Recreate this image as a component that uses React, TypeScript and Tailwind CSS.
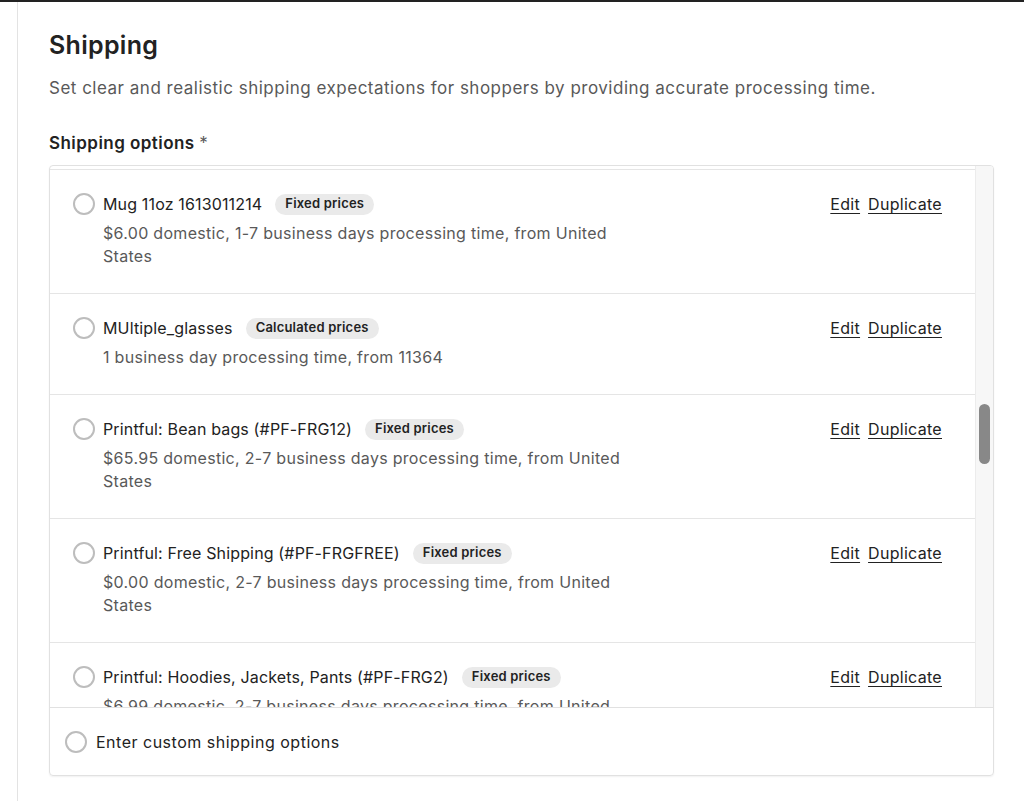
import React from "react";

type Opt = { name: string; badge: string; desc: string };

const options: Opt[] = [
  { name: "Mug 11oz 1613011214", badge: "Fixed prices", desc: "$6.00 domestic, 1-7 business days processing time, from United States" },
  { name: "MUltiple_glasses", badge: "Calculated prices", desc: "1 business day processing time, from 11364" },
  { name: "Printful: Bean bags (#PF-FRG12)", badge: "Fixed prices", desc: "$65.95 domestic, 2-7 business days processing time, from United States" },
  { name: "Printful: Free Shipping (#PF-FRGFREE)", badge: "Fixed prices", desc: "$0.00 domestic, 2-7 business days processing time, from United States" },
  { name: "Printful: Hoodies, Jackets, Pants (#PF-FRG2)", badge: "Fixed prices", desc: "$6.99 domestic, 2-7 business days processing time, from United States" },
];

function Radio() {
  return <span className="block w-[22px] h-[22px] shrink-0 rounded-full border-2 border-[#bdbdbd] bg-white" />;
}

export default function App() {
  return (
    <div
      className="w-[1024px] h-[801px] bg-white border-t-2 border-[#222222] flex overflow-hidden text-[#222222]"
      style={{ fontFamily: "Inter, 'Noto Sans', Arial, sans-serif" }}
    >
      <div className="w-[17px] shrink-0" />
      <div className="flex-1 border-l border-[#e3e3e3] pl-[31px] pt-[27px]">
        <h1 className="text-[25px] leading-[32px] font-semibold tracking-[0.3px]">Shipping</h1>
        <p className="mt-[15px] text-[17px] leading-[24px] tracking-[0.5px] text-[#595959]">
          Set clear and realistic shipping expectations for shoppers by providing accurate processing time.
        </p>
        <div className="mt-[31px] text-[17px] leading-[24px] font-semibold tracking-[0.45px]">
          Shipping options <span className="text-[#595959] font-normal">*</span>
        </div>
        <div className="mt-[10px] w-[945px] border border-[#e1e1e1] rounded-[4px] shadow-[0_1px_2px_rgba(0,0,0,0.06)] overflow-hidden tracking-[0.3px]">
          <div className="flex h-[541px]">
            <div className="flex-1 overflow-hidden">
              <div className="h-[4px] border-b border-[#e5e5e5]" />
              {options.map((o, i) => (
                <div key={i} className="flex items-start border-b border-[#e5e5e5] pl-[23px] pr-[33px] pt-[22px] pb-[25px]">
                  <div className="flex items-start gap-[8px] flex-1">
                    <div className="h-[24px] flex items-center">
                      <Radio />
                    </div>
                    <div>
                      <div className="flex items-center gap-[13px] h-[24px]">
                        <span className="text-[16px] leading-[24px] tracking-[0.15px]">{o.name}</span>
                        <span className="rounded-full bg-[#eaeaea] px-[10px] h-[21px] flex items-center text-[13px] font-semibold tracking-[0.2px]">
                          {o.badge}
                        </span>
                      </div>
                      <div className="mt-[6px] w-[520px] text-[16px] leading-[23px] text-[#595959]">{o.desc}</div>
                    </div>
                  </div>
                  <div className="flex items-center gap-[8px] h-[24px] text-[16px]">
                    <a className="underline underline-offset-[3px]">Edit</a>
                    <a className="underline underline-offset-[3px]">Duplicate</a>
                  </div>
                </div>
              ))}
            </div>
            <div className="w-[18px] shrink-0 bg-[#f7f7f7] border-l border-[#ececec] relative">
              <div className="absolute left-[3px] top-[238px] w-[11px] h-[60px] rounded-full bg-[#888888]" />
            </div>
          </div>
          <div className="border-t border-[#e1e1e1] h-[68px] flex items-center gap-[9px] pl-[15px]">
            <Radio />
            <span className="text-[16px] leading-[24px] tracking-[0.5px]">Enter custom shipping options</span>
          </div>
        </div>
      </div>
    </div>
  );
}
